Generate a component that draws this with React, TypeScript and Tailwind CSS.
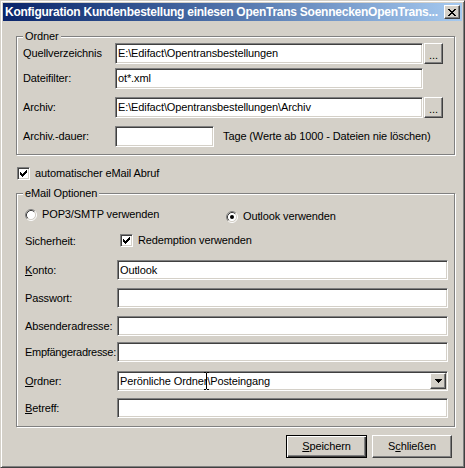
import React from "react";

const sunken =
  "border border-t-[#808080] border-l-[#808080] border-b-white border-r-white shadow-[inset_1px_1px_0_#404040,inset_-1px_-1px_0_#d4d0c8] bg-white";
const raised =
  "border border-t-white border-l-white border-b-[#404040] border-r-[#404040] shadow-[inset_-1px_-1px_0_#808080] bg-[#d4d0c8]";

function CloseX() {
  const px: [number, number][] = [
    [0, 0], [1, 0], [6, 0], [7, 0],
    [1, 1], [2, 1], [5, 1], [6, 1],
    [2, 2], [3, 2], [4, 2], [5, 2],
    [3, 3], [4, 3],
    [2, 4], [3, 4], [4, 4], [5, 4],
    [1, 5], [2, 5], [5, 5], [6, 5],
    [0, 6], [1, 6], [6, 6], [7, 6],
  ];
  return (
    <svg width="8" height="7" viewBox="0 0 8 7" shapeRendering="crispEdges">
      {px.map(([x, y], i) => (
        <rect key={i} x={x} y={y} width="1" height="1" fill="#000" />
      ))}
    </svg>
  );
}

function Check() {
  const cols = [2, 3, 4, 3, 2, 1, 0];
  return (
    <svg width="7" height="7" viewBox="0 0 7 7" shapeRendering="crispEdges">
      {cols.map((y, x) => (
        <rect key={x} x={x} y={y} width="1" height="3" fill="#000" />
      ))}
    </svg>
  );
}

function CheckBox() {
  return (
    <div className={`${sunken} w-[13px] h-[13px] shrink-0 flex items-center justify-center`}>
      <Check />
    </div>
  );
}

function Radio({ checked }: { checked?: boolean }) {
  return (
    <svg width="12" height="12" viewBox="0 0 12 12" className="shrink-0">
      <circle cx="6" cy="6" r="4.5" fill="#fff" />
      <path d="M 2.11 9.89 A 5.5 5.5 0 0 1 9.89 2.11" stroke="#808080" fill="none" strokeWidth="1" />
      <path d="M 9.89 2.11 A 5.5 5.5 0 0 1 2.11 9.89" stroke="#ffffff" fill="none" strokeWidth="1" />
      <path d="M 2.82 9.18 A 4.5 4.5 0 0 1 9.18 2.82" stroke="#404040" fill="none" strokeWidth="1" />
      <path d="M 9.18 2.82 A 4.5 4.5 0 0 1 2.82 9.18" stroke="#d4d0c8" fill="none" strokeWidth="1" />
      {checked && <circle cx="6" cy="6" r="2" fill="#000" />}
    </svg>
  );
}

function Arrow() {
  return (
    <svg width="7" height="4" viewBox="0 0 7 4" shapeRendering="crispEdges">
      <rect x="0" y="0" width="7" height="1" fill="#000" />
      <rect x="1" y="1" width="5" height="1" fill="#000" />
      <rect x="2" y="2" width="3" height="1" fill="#000" />
      <rect x="3" y="3" width="1" height="1" fill="#000" />
    </svg>
  );
}

function Group({
  label,
  className,
  children,
}: {
  label: string;
  className: string;
  children: React.ReactNode;
}) {
  return (
    <div
      className={`w-[439px] border border-[#808080] shadow-[inset_1px_1px_0_white,1px_1px_0_white] flex flex-col ${className}`}
    >
      <span className="-mt-[7px] ml-[6px] px-[2px] self-start bg-[#d4d0c8] h-[13px] leading-[13px] whitespace-nowrap">
        {label}
      </span>
      {children}
    </div>
  );
}

function DotsButton() {
  return (
    <div className={`${raised} ml-[1px] w-[19px] h-[21px] flex items-end justify-center pb-[3px] leading-[10px]`}>
      ...
    </div>
  );
}

function EmailRow({
  label,
  className,
  labelClass = "",
  children,
}: {
  label: React.ReactNode;
  className: string;
  labelClass?: string;
  children?: React.ReactNode;
}) {
  return (
    <div className={`flex items-center pl-[8px] ${className}`}>
      <span className={`w-[92px] shrink-0 whitespace-nowrap relative z-10 ${labelClass}`}>{label}</span>
      <div className={`${sunken} w-[331px] h-[20px] flex items-center pl-[2px] whitespace-nowrap relative`}>
        {children}
      </div>
    </div>
  );
}

export default function App() {
  return (
    <div className="w-[465px] h-[468px] bg-[#d4d0c8] border border-t-[#d4d0c8] border-l-[#d4d0c8] border-b-[#404040] border-r-[#404040] shadow-[inset_1px_1px_0_white,inset_-1px_-1px_0_#808080] p-[2px] text-[11px] leading-[13px] tracking-[-0.12px] text-black font-['Liberation_Sans',Arial,sans-serif] flex flex-col">
      {/* Title bar */}
      <div className="h-[18px] bg-linear-to-r from-[#0a246a] to-[#a6caf0] flex items-center pl-[2px] pr-[2px] shrink-0">
        <span className="text-white font-bold text-[12px] whitespace-nowrap tracking-[-0.25px]">
          Konfiguration Kundenbestellung einlesen OpenTrans SoenneckenOpenTrans...
        </span>
        <div className={`${raised} ml-auto w-[16px] h-[14px] flex items-center justify-center shrink-0`}>
          <CloseX />
        </div>
      </div>

      <div className="flex flex-col pl-[13px]">
        {/* Ordner group */}
        <Group label="Ordner" className="mt-[15px] h-[119px]">
          <div className="flex items-center pl-[6px] h-[21px]">
            <span className="w-[92px] shrink-0">Quellverzeichnis</span>
            <div className={`${sunken} w-[308px] h-[21px] flex items-center pl-[2px]`}>
              E:\Edifact\Opentransbestellungen
            </div>
            <DotsButton />
          </div>
          <div className="flex items-center pl-[6px] h-[21px] mt-[4px]">
            <span className="w-[92px] shrink-0">Dateifilter:</span>
            <div className={`${sunken} w-[308px] h-[21px] flex items-center pl-[2px]`}>ot*.xml</div>
          </div>
          <div className="flex items-center pl-[6px] h-[21px] mt-[8px]">
            <span className="w-[92px] shrink-0">Archiv:</span>
            <div className={`${sunken} w-[308px] h-[21px] flex items-center pl-[2px]`}>
              E:\Edifact\Opentransbestellungen\Archiv
            </div>
            <DotsButton />
          </div>
          <div className="flex items-center pl-[6px] h-[21px] mt-[8px]">
            <span className="w-[92px] shrink-0">Archiv.-dauer:</span>
            <div className={`${sunken} w-[99px] h-[21px]`} />
            <span className="ml-[9px] whitespace-nowrap">Tage (Werte ab 1000 - Dateien nie löschen)</span>
          </div>
        </Group>

        {/* auto checkbox */}
        <div className="flex items-center h-[13px] mt-[12px] ml-[1px]">
          <CheckBox />
          <span className="ml-[5px]">automatischer eMail Abruf</span>
        </div>

        {/* eMail group */}
        <Group label="eMail Optionen" className="mt-[13px] h-[234px]">
          <div className="flex items-start pl-[8px] h-[13px] mt-[8px]">
            <div className="w-[201px] flex items-center">
              <Radio />
              <span className="ml-[5px]">POP3/SMTP verwenden</span>
            </div>
            <div className="flex items-center mt-[2px]">
              <Radio checked />
              <span className="ml-[5px]">Outlook verwenden</span>
            </div>
          </div>
          <div className="flex items-center pl-[8px] h-[13px] mt-[13px]">
            <span className="w-[95px] shrink-0 mt-[2px]">Sicherheit:</span>
            <CheckBox />
            <span className="ml-[5px]">Redemption verwenden</span>
          </div>
          <EmailRow
            className="mt-[13px]"
            label={
              <>
                <span className="underline">K</span>onto:
              </>
            }
          >
            Outlook
          </EmailRow>
          <EmailRow className="mt-[8px]" label="Passwort:" />
          <EmailRow className="mt-[8px]" label="Absenderadresse:" />
          <EmailRow className="mt-[6px]" label="Empfängeradresse:" labelClass="tracking-[-0.3px]" />
          <EmailRow
            className="mt-[9px]"
            label={
              <>
                <span className="underline">O</span>rdner:
              </>
            }
          >
            Perönliche Ordner\Posteingang
            <svg
              width="5"
              height="18"
              viewBox="0 0 5 18"
              className="absolute left-[86px] top-[0px]"
              shapeRendering="crispEdges"
            >
              <rect x="0" y="0" width="2" height="1" fill="#000" />
              <rect x="3" y="0" width="2" height="1" fill="#000" />
              <rect x="2" y="1" width="1" height="16" fill="#000" />
              <rect x="0" y="17" width="2" height="1" fill="#000" />
              <rect x="3" y="17" width="2" height="1" fill="#000" />
            </svg>
            <div className={`${raised} absolute right-[1px] top-[1px] w-[16px] h-[16px] flex items-center justify-center`}>
              <Arrow />
            </div>
          </EmailRow>
          <EmailRow
            className="mt-[7px]"
            label={
              <>
                <span className="underline">B</span>etreff:
              </>
            }
          />
        </Group>
      </div>

      {/* Buttons */}
      <div className="flex justify-end gap-[5px] mt-[8px] pr-[10px]">
        <div className="w-[81px] h-[23px] border border-black shadow-[inset_1px_1px_0_white,inset_-1px_-1px_0_#404040,inset_-2px_-2px_0_#808080] bg-[#d4d0c8] flex items-center justify-center">
          <span>
            <span className="underline">S</span>peichern
          </span>
        </div>
        <div className={`${raised} w-[80px] h-[23px] flex items-center justify-center`}>
          <span>
            S<span className="underline">c</span>hließen
          </span>
        </div>
      </div>
    </div>
  );
}
